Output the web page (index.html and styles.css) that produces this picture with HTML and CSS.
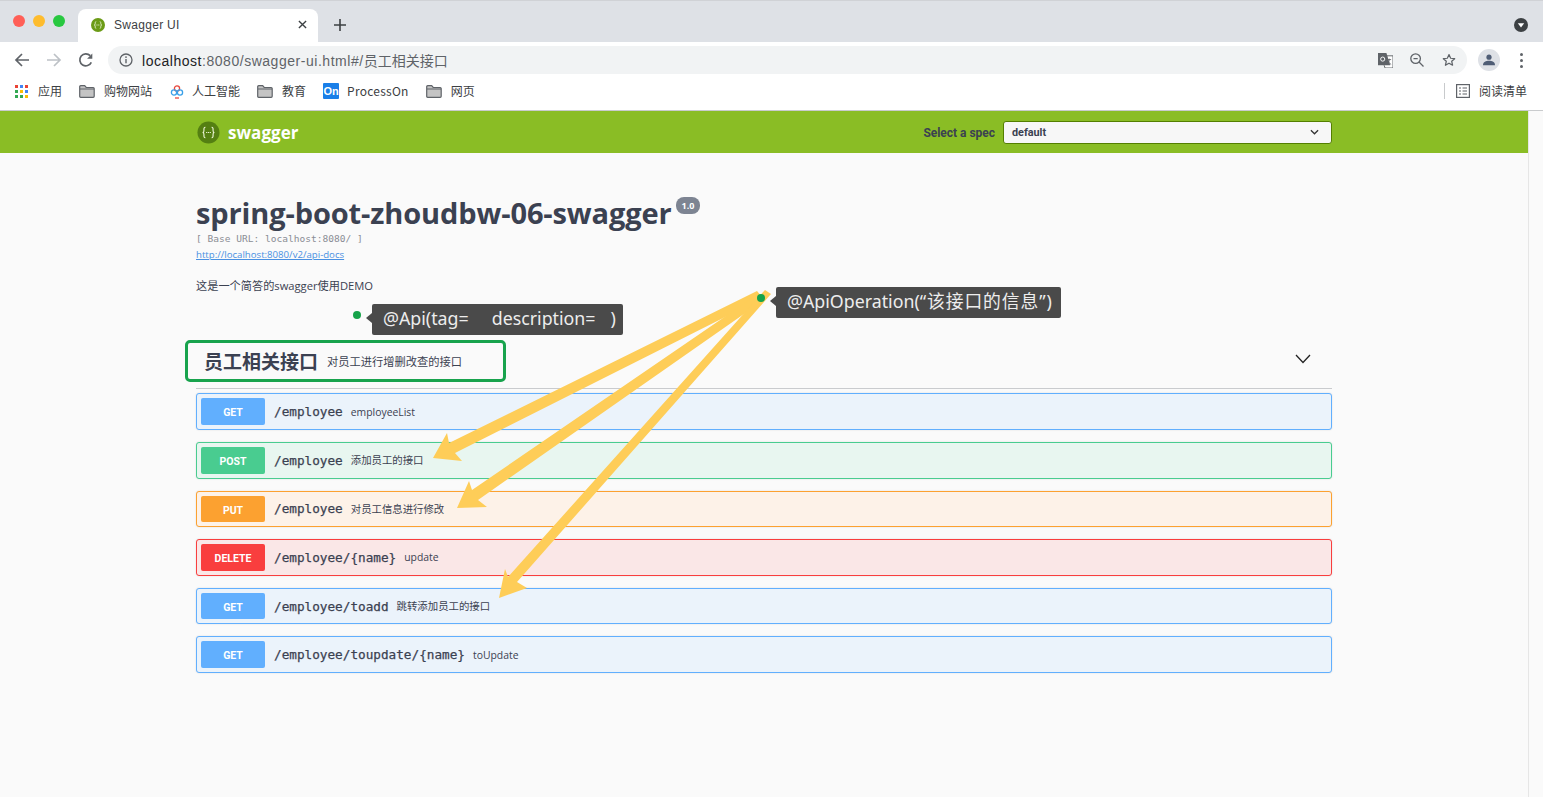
FILE: index.html
```html
<!DOCTYPE html>
<html lang="zh">
<head>
<meta charset="utf-8">
<title>Swagger UI</title>
<link rel="stylesheet" href="styles.css">
</head>
<body>
<header class="browser">
  <div class="tabstrip">
    <div class="lights"><i class="light red"></i><i class="light yellow"></i><i class="light green"></i></div>
    <div class="tab">
      <svg class="favicon" viewBox="0 0 14 14"><circle cx="7" cy="7" r="7" fill="#6b9b16"/><path d="M5.2 3.6C4 3.6 4.3 5 4.2 6c0 .6-.5 1-.9 1 .4 0 .9.4.9 1 .1 1-.2 2.400 1 2.400M8.800 3.600c1.200 0 .9 1.400 1 2.400 0 .6.5 1 .9 1-.4 0-.9.4-.9 1-.1 1 .2 2.400-1 2.400" fill="none" stroke="#e8f2d2" stroke-width=".9"/><path d="M5.500 7h3" stroke="#e8f2d2" stroke-width="1" stroke-dasharray="1 .8"/></svg>
      <span class="tab-title">Swagger UI</span>
      <svg class="tab-close" viewBox="0 0 10 10"><path d="M1 1l8 8M9 1l-8 8" stroke="#3c4043" stroke-width="1.500"/></svg>
    </div>
    <svg class="newtab" viewBox="0 0 12 12"><path d="M6 0v12M0 6h12" stroke="#3c4043" stroke-width="1.600"/></svg>
    <svg class="tabmenu" viewBox="0 0 14 14"><circle cx="7" cy="7" r="7" fill="#3c4043"/><path d="M3.800 5.300h6.400L7 9.500z" fill="#fff"/></svg>
  </div>
  <div class="toolbar">
    <svg class="nav" viewBox="0 0 16 16"><path d="M15 8H2M8 2L2 8l6 6" fill="none" stroke="#5f6368" stroke-width="1.700"/></svg>
    <svg class="nav" viewBox="0 0 16 16"><path d="M1 8h13M8 2l6 6-6 6" fill="none" stroke="#bdc1c6" stroke-width="1.700"/></svg>
    <svg class="nav" viewBox="0 0 16 16"><path d="M13.300 10.300A6 6 0 1 1 12.200 3.700" fill="none" stroke="#5f6368" stroke-width="1.700"/><path d="M14.300 1.500v5.200H9.100z" fill="#5f6368"/></svg>
    <div class="omnibox">
      <svg class="info" viewBox="0 0 14 14"><circle cx="7" cy="7" r="6" fill="none" stroke="#5f6368" stroke-width="1.300"/><path d="M7 6v4.200" stroke="#5f6368" stroke-width="1.400"/><circle cx="7" cy="4.100" r=".9" fill="#5f6368"/></svg>
      <span class="url"><span class="url-latin"><b>localhost</b>:8080/swagger-ui.html#/</span>员工相关接口</span>
      <svg class="omni-icon translate" viewBox="0 0 16 16"><path d="M0 0h9l1 3h6v13H7l-1-3H0z" fill="#fff"/><path d="M0 0h9l4 13H0z" fill="#5f6368"/><path d="M8 3h8v13H7.500l-1-3" fill="none" stroke="#5f6368"/><circle cx="5" cy="6.500" r="2.200" fill="none" stroke="#fff"/><path d="M10 7h4M12 6v1c0 2-1 4-2.500 5M10.500 8c.5 2 2 3.500 3.500 4" fill="none" stroke="#5f6368" stroke-width=".9"/></svg>
      <svg class="omni-icon" viewBox="0 0 14 14"><circle cx="5.600" cy="5.600" r="4.800" fill="none" stroke="#5f6368" stroke-width="1.300"/><path d="M3.500 5.600h4.200M9 9l4.500 4.500" stroke="#5f6368" stroke-width="1.300"/></svg>
      <svg class="omni-icon" viewBox="0 0 16 16"><path d="M8 1.800l1.900 4.200 4.600.5-3.400 3 1 4.500L8 11.700 3.900 14l1-4.500-3.400-3 4.600-.5z" fill="none" stroke="#5f6368" stroke-width="1.400" stroke-linejoin="round"/></svg>
    </div>
    <div class="avatar"><svg viewBox="0 0 14 14"><circle cx="7" cy="3.700" r="3" fill="#4f5d75"/><path d="M0 13c0-3.500 3.500-5 7-5s7 1.500 7 5z" fill="#4f5d75"/></svg></div>
    <div class="dots"><i></i><i></i><i></i></div>
  </div>
  <nav class="bookmarks">
    <span class="mark apps"><svg class="gridicon" viewBox="0 0 13 13"><rect width="3" height="3" fill="#ea4335"/><rect x="5" width="3" height="3" fill="#4285f4"/><rect x="10" width="3" height="3" fill="#ea4335"/><rect y="5" width="3" height="3" fill="#34a853"/><rect x="5" y="5" width="3" height="3" fill="#fbbc05"/><rect x="10" y="5" width="3" height="3" fill="#4285f4"/><rect y="10" width="3" height="3" fill="#34a853"/><rect x="5" y="10" width="3" height="3" fill="#34a853"/><rect x="10" y="10" width="3" height="3" fill="#fbbc05"/></svg>应用</span>
    <span class="mark"><svg class="folder" viewBox="0 0 16 13"><path d="M.7 2.500V1.700q0-1 1-1h4l1.500 1.800h7q1 0 1 1v7.800q0 1-1 1H1.700q-1 0-1-1z" fill="#c4c4c4" stroke="#5f6368" stroke-width="1.200"/><path d="M1 4h14" stroke="#5f6368"/></svg>购物网站</span>
    <span class="mark"><svg class="aiicon" viewBox="0 0 16 16"><circle cx="8" cy="5.500" r="2.600" fill="none" stroke="#e8473c" stroke-width="1.300"/><circle cx="5" cy="9.500" r="2.600" fill="none" stroke="#3aa0e8" stroke-width="1.300"/><circle cx="11" cy="9.500" r="2.600" fill="none" stroke="#3aa0e8" stroke-width="1.300"/><path d="M6 15h4" stroke="#e8473c" stroke-width="1.300"/></svg>人工智能</span>
    <span class="mark"><svg class="folder" viewBox="0 0 16 13"><path d="M.7 2.500V1.700q0-1 1-1h4l1.500 1.800h7q1 0 1 1v7.800q0 1-1 1H1.700q-1 0-1-1z" fill="#c4c4c4" stroke="#5f6368" stroke-width="1.200"/><path d="M1 4h14" stroke="#5f6368"/></svg>教育</span>
    <span class="mark mark-latin"><span class="onicon">On</span>ProcessOn</span>
    <span class="mark"><svg class="folder" viewBox="0 0 16 13"><path d="M.7 2.500V1.700q0-1 1-1h4l1.500 1.800h7q1 0 1 1v7.800q0 1-1 1H1.700q-1 0-1-1z" fill="#c4c4c4" stroke="#5f6368" stroke-width="1.200"/><path d="M1 4h14" stroke="#5f6368"/></svg>网页</span>
    <span class="reading"><svg class="readicon" viewBox="0 0 14 14"><rect x=".6" y=".6" width="12.800" height="12.800" fill="none" stroke="#5f6368" stroke-width="1.200"/><path d="M3 4h2M6.500 4H11M3 7h2M6.500 7H11M3 10h2M6.500 10H11" stroke="#5f6368" stroke-width="1.200"/></svg>阅读清单</span>
  </nav>
</header>

<div class="viewport">
  <main class="page">
    <div class="topbar">
      <div class="wrap topbar-inner">
        <a class="brand">
          <svg class="logo" viewBox="0 0 24 24"><circle cx="12" cy="12" r="11.500" fill="#547f12"/><path d="M8.800 6.500C6.800 6.500 7.300 9 7.200 10.500c0 1-.7 1.500-1.400 1.500.7 0 1.400.5 1.400 1.500.1 1.500-.4 4 1.600 4M15.200 6.500c2 0 1.500 2.500 1.600 4 0 1 .7 1.500 1.400 1.500-.7 0-1.400.5-1.400 1.500-.1 1.500.4 4-1.600 4" fill="none" stroke="#eaf3d4" stroke-width="1.200"/><path d="M9.500 12h5" stroke="#eaf3d4" stroke-width="1.300" stroke-dasharray="1.200 .7"/></svg>
          <span class="brand-name">swagger</span>
        </a>
        <label class="spec-label">Select a spec</label>
        <div class="spec-select"><span class="spec-value">default</span><svg viewBox="0 0 10 6"><path d="M1 1l4 4 4-4" fill="none" stroke="#333" stroke-width="1.400"/></svg></div>
      </div>
    </div>

    <div class="wrap">
      <section class="info-block">
        <h1 class="title">spring-boot-zhoudbw-06-swagger<small class="version">1.0</small></h1>
        <p class="base">[ Base URL: localhost:8080/ ]</p>
        <a class="docs">http://localhost:8080/v2/api-docs</a>
        <p class="desc">这是一个简答的swagger使用DEMO</p>
      </section>

      <div class="tag">
        <h2 class="tag-name">员工相关接口</h2>
        <span class="tag-desc">对员工进行增删改查的接口</span>
        <svg class="tag-arrow" viewBox="0 0 16 10"><path d="M1 1l7 7.500L15 1" fill="none" stroke="#222" stroke-width="1.300"/></svg>
      </div>

      <div class="ops">
        <div class="op get"><span class="method">GET</span><span class="path">/employee</span><span class="sum">employeeList</span></div>
        <div class="op post"><span class="method">POST</span><span class="path">/employee</span><span class="sum">添加员工的接口</span></div>
        <div class="op put"><span class="method">PUT</span><span class="path">/employee</span><span class="sum">对员工信息进行修改</span></div>
        <div class="op delete"><span class="method">DELETE</span><span class="path">/employee/{name}</span><span class="sum">update</span></div>
        <div class="op get"><span class="method">GET</span><span class="path">/employee/toadd</span><span class="sum">跳转添加员工的接口</span></div>
        <div class="op get"><span class="method">GET</span><span class="path">/employee/toupdate/{name}</span><span class="sum">toUpdate</span></div>
      </div>
    </div>
  </main>
  <div class="gutter"></div>

  <svg class="arrows" viewBox="0 0 1543 797">
    <polygon fill="#fecd58" points="757,291 763,298 455,453 462,461 433,458 447,433 449,443"/>
    <polygon fill="#fecd58" points="758,294 764,300 478,500 487,507 457,508 469,481 472,490"/>
    <polygon fill="#fecd58" points="765,290 771,294 517,582 527,588 499,598 505,569 508,577"/>
  </svg>
  <div class="highlight"></div>
  <i class="dot dot-api"></i>
  <div class="note note-api">@Api(tag=<span class="gap1"></span>description=<span class="gap2"></span>)</div>
  <i class="dot dot-op"></i>
  <div class="note note-op">@ApiOperation(<span class="quoted">“该接口的信息”</span>)</div>
</div>
</body>
</html>
```
FILE: styles.css
```css
* { box-sizing: border-box; }
html, body { margin: 0; height: 797px; overflow: hidden; }
body { font-family: "Noto Sans", "Noto Sans CJK SC", sans-serif; background: #fff; color: #3b4151; display: flex; flex-direction: column; }
p, h1, h2 { margin: 0; }

/* browser chrome */
.browser { height: 111px; flex: none; border-bottom: 1px solid #c9cbcd; background: #fff; }
.tabstrip { height: 42px; background: #dee1e6; display: flex; align-items: flex-end; padding-left: 78px; position: relative; border-top: 1px solid #d0d2d6; }
.lights { position: absolute; left: 13px; top: 14px; display: flex; gap: 8px; }
.light { width: 12px; height: 12px; border-radius: 50%; display: block; }
.red { background: #ff5f57; }
.yellow { background: #febc2e; }
.green { background: #28c840; }
.tab { width: 240px; height: 33px; background: #fff; border-radius: 8px 8px 0 0; display: flex; align-items: center; padding: 0 11px 2px 13px; }
.favicon { width: 14px; height: 14px; flex: none; }
.tab-title { font: 12px/16px "Liberation Sans", sans-serif; color: #3c4043; margin-left: 9px; flex: 1; letter-spacing: .3px; }
.tab-close { width: 9px; height: 9px; }
.newtab { width: 12px; height: 12px; margin: 0 0 11px 16px; }
.tabmenu { width: 14px; height: 14px; position: absolute; right: 15px; top: 17px; }

.toolbar { height: 36px; display: flex; align-items: center; padding-left: 14px; }
.nav { width: 16px; height: 16px; margin-right: 16px; flex: none; }
.toolbar .nav:nth-child(3) { margin-right: 14px; }
.omnibox { width: 1359px; height: 28px; border-radius: 14px; background: #f1f3f4; display: flex; align-items: center; padding: 0 11px 0 11px; flex: none; }
.info { width: 14px; height: 14px; flex: none; }
.url { font: 14px/18px "Noto Sans CJK SC", sans-serif; color: #5f6368; margin-left: 9px; flex: 1; }
.url-latin { font-family: "Liberation Sans", sans-serif; letter-spacing: .53px; }
.url b { font-weight: 400; color: #202124; }
.omni-icon { width: 14px; height: 14px; margin-left: 18px; flex: none; }
.translate { width: 15px; height: 15px; margin-right: -1px; }
.avatar { width: 22px; height: 22px; border-radius: 50%; background: #dee1e6; margin-left: 11px; display: flex; align-items: center; justify-content: center; }
.avatar svg { width: 12px; height: 12px; }
.dots { margin-left: 20px; display: flex; flex-direction: column; gap: 3px; }
.dots i { display: block; width: 3px; height: 3px; border-radius: 50%; background: #5f6368; }

.bookmarks { height: 32px; display: flex; align-items: center; padding: 0 0 6px 15px; font: 12px/16px "Noto Sans CJK SC", "Liberation Sans", sans-serif; color: #3c4043; }
.mark { display: flex; align-items: center; margin-right: 17px; }
.mark-latin { letter-spacing: .25px; }
.gridicon { width: 13px; height: 13px; margin-right: 10px; }
.folder { width: 16px; height: 13px; margin-right: 9px; }
.aiicon { width: 16px; height: 16px; margin-right: 7px; }
.onicon { width: 16px; height: 16px; margin-right: 8px; background: #1a7fe8; color: #fff; font: 700 11px/16px "Liberation Sans", sans-serif; text-align: center; border-radius: 1px; letter-spacing: 0; }
.reading { margin-left: auto; display: flex; align-items: center; margin-right: 16px; border-left: 1px solid #c8cacc; padding-left: 11px; height: 16px; }
.readicon { width: 14px; height: 14px; margin-right: 9px; }

/* page */
.viewport { flex: 1; display: flex; position: relative; min-height: 0; }
.page { flex: 1; background: #fafafa; min-width: 0; }
.gutter { width: 15px; flex: none; background: #fafafa; border-left: 1px solid #e6e6e6; }
.wrap { width: 1136px; margin-left: 196px; }

.topbar { height: 42px; background: #8abd25; }
.topbar-inner { display: flex; align-items: center; height: 42px; }
.brand { display: flex; align-items: center; flex: 1; }
.logo { width: 23px; height: 23px; margin-left: 1px; }
.brand-name { font: 700 17px/20px "Open Sans", sans-serif; color: #fff; margin: 2px 0 0 8px; letter-spacing: .05px; }
.spec-label { font: 700 12px/14px "Roboto", sans-serif; color: #3b4151; margin: 1px 8px 0 0; letter-spacing: -.02px; }
.spec-select { width: 329px; height: 23px; background: #f7f7f7; border: 1px solid #547f00; border-radius: 3px; display: flex; align-items: center; justify-content: space-between; padding: 0 12px 0 8px; font: 700 10.800px/12px "Roboto", sans-serif; color: #3b4151; }
.spec-value { margin-top: 1px; }
.spec-select svg { width: 9px; height: 6px; }

.info-block { padding-top: 42px; }
.title { font: 700 29px/36px "Open Sans", sans-serif; color: #3b4151; display: flex; align-items: flex-start; height: 36px; letter-spacing: -.12px; }
.version { font: 700 9px/11px "Open Sans", sans-serif; color: #fff; background: #7d8492; border-radius: 8px; padding: 3px 6px; margin: 2px 0 0 4px; letter-spacing: 0; }
.base { font: 9.550px/12px "DejaVu Sans Mono", monospace; color: #8a8d95; margin-top: 2px; }
.docs { display: block; font: 9.650px/13px "Open Sans", sans-serif; color: #4990e2; text-decoration: underline; margin-top: 3px; }
.desc { font: 11.200px/16px "Open Sans", "Noto Sans CJK SC", sans-serif; color: #3b4151; margin-top: 17px; }

.tag { height: 49px; display: flex; align-items: center; border-bottom: 1px solid #c9cbce; margin-top: 46px; padding: 0 21px 7px 8px; }
.tag-name { font: 700 19px/24px "Noto Sans CJK SC", sans-serif; color: #3b4151; }
.tag-desc { font: 11.250px/16px "Noto Sans CJK SC", sans-serif; color: #3b4151; margin-left: 9px; flex: 1; }
.tag-arrow { width: 16px; height: 10px; margin-bottom: 4px; }

.ops { padding-top: 4.400px; display: flex; flex-direction: column; gap: 12px; }
.op { height: 36.600px; border: 1px solid; border-radius: 3px; display: flex; align-items: center; padding-left: 4px; box-shadow: 0 0 2px rgba(0,0,0,.12); }
.method { width: 64px; height: 26.600px; border-radius: 2px; color: #fff; font: 700 10.500px/29px "Roboto", sans-serif; text-align: center; flex: none; }
.path { font: 500 12.700px/16px "DejaVu Sans Mono", monospace; color: #3b4151; margin: 1px 0 0 9px; -webkit-text-stroke: .25px #3b4151; }
.sum { font: 10.400px/14px "Open Sans", "Noto Sans CJK SC", sans-serif; color: #3b4151; margin-left: 8px; }
.get { background: #ebf3fb; border-color: #61affe; }
.get .method { background: #61affe; }
.post { background: #e8f6f0; border-color: #49cc90; }
.post .method { background: #49cc90; }
.put { background: #fdf2e8; border-color: #fca130; }
.put .method { background: #fca130; }
.delete { background: #fae7e7; border-color: #f93e3e; }
.delete .method { background: #f93e3e; }

/* annotations laid over the page */
.arrows { position: absolute; left: 0; top: -111px; width: 1543px; height: 797px; pointer-events: none; }
.highlight { position: absolute; left: 185px; top: 229px; width: 321px; height: 42px; border: 3px solid #18a34d; border-radius: 5px; }
.dot { position: absolute; width: 8px; height: 8px; border-radius: 50%; background: #16a34a; }
.dot-api { left: 353px; top: 200px; }
.dot-op { left: 757px; top: 183px; }
.note { position: absolute; height: 31px; background: #4a4a4a; border-radius: 2px; color: #ededed; font: 17.800px/29px "Noto Sans", "Noto Sans CJK SC", sans-serif; padding-left: 11px; white-space: nowrap; }
.note::before { content: ""; position: absolute; left: -6px; top: 9px; border: 5px solid transparent; border-left: 0; border-right: 6px solid #4a4a4a; }
.note-api { left: 372px; top: 193px; width: 251px; }
.note-op { left: 776px; top: 176px; width: 285px; }
.gap1 { display: inline-block; width: 23px; }
.gap2 { display: inline-block; width: 15px; }
.quoted { letter-spacing: .9px; }
```
